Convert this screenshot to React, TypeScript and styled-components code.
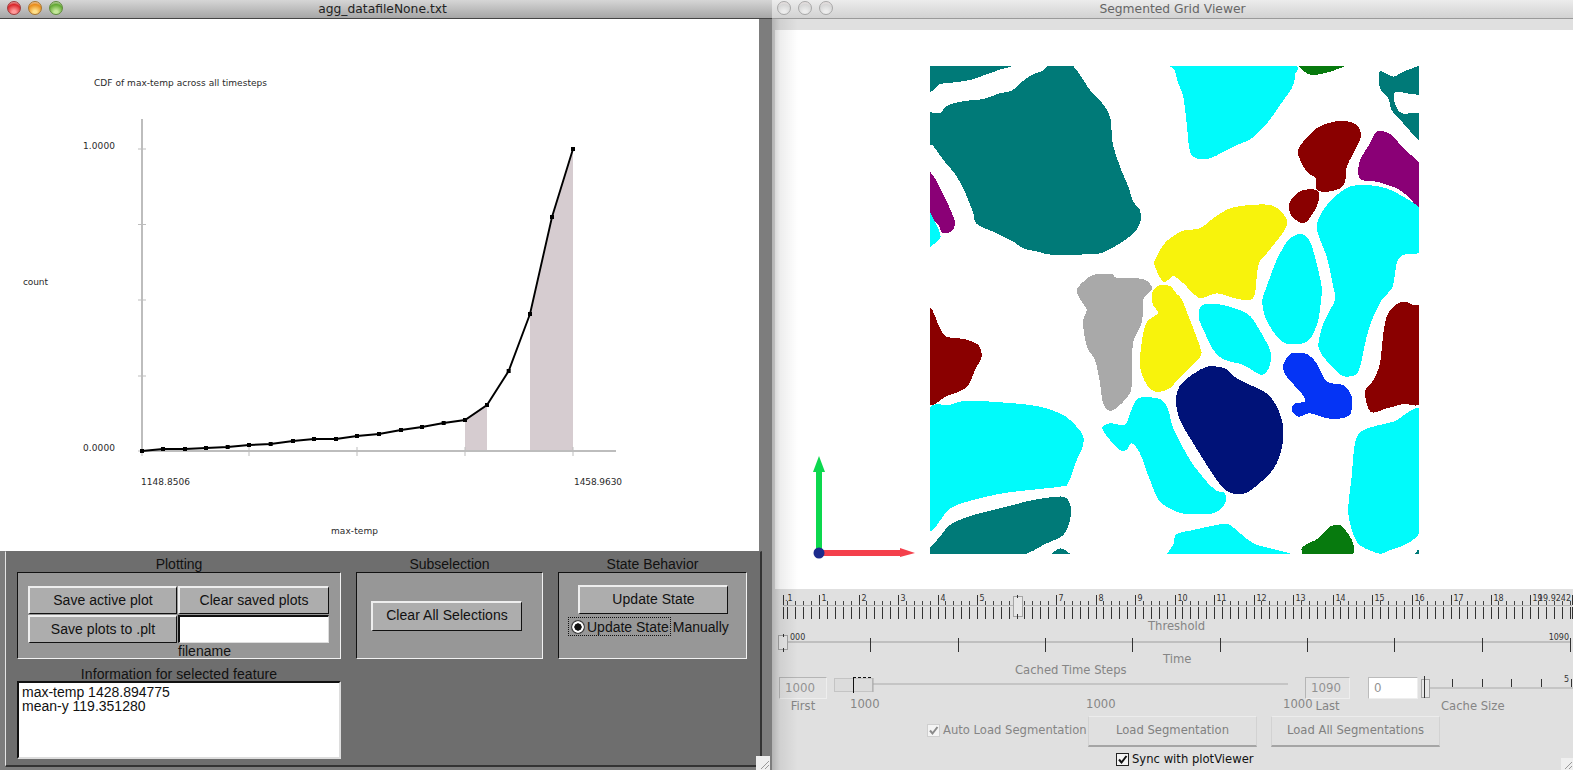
import React from "react";
import styled, { createGlobalStyle } from "styled-components";

const Global = createGlobalStyle`
  html, body { margin: 0; padding: 0; width: 1573px; height: 770px; overflow: hidden; background: #7d7d7d; }
  #root { width: 1573px; height: 770px; }
  * { box-sizing: border-box; }
`;

const Desktop = styled.div`
  display: flex;
  width: 1573px;
  height: 770px;
  overflow: hidden;
`;

/* ---------- window chrome ---------- */
const LeftWindow = styled.section`
  width: 772px;
  height: 770px;
  background: #7d7d7d;
  display: flex;
  flex-direction: column;
`;
const RightWindow = styled.section`
  position: relative;
  width: 801px;
  height: 770px;
  background: #e0e0e0;
  display: flex;
  flex-direction: column;
  &::after {
    content: "";
    position: absolute;
    left: 0;
    top: 19px;
    bottom: 0;
    width: 26px;
    pointer-events: none;
    background: linear-gradient(90deg, rgba(0, 0, 0, 0.2), rgba(0, 0, 0, 0.07) 8px, rgba(0, 0, 0, 0));
  }
`;
const TitleBar = styled.header<{ $active?: boolean }>`
  position: relative;
  flex: none;
  height: 19px;
  display: flex;
  align-items: center;
  justify-content: center;
  padding-right: ${(p) => (p.$active ? 7 : 0)}px;
  font: 12.3px "DejaVu Sans", sans-serif;
  color: ${(p) => (p.$active ? "#222" : "#666")};
  background: ${(p) =>
    p.$active ? "linear-gradient(#d6d6d6, #a6a6a6)" : "linear-gradient(#ececec, #d2d2d2)"};
  border-bottom: 1px solid ${(p) => (p.$active ? "#454545" : "#9a9a9a")};
`;
const Lights = styled.div<{ $left: number }>`
  position: absolute;
  left: ${(p) => p.$left}px;
  top: 1px;
  display: flex;
  gap: 7px;
`;
const Light = styled.span<{ $a: string; $b: string; $edge: string }>`
  width: 14px;
  height: 14px;
  border-radius: 50%;
  border: 1px solid ${(p) => p.$edge};
  background: radial-gradient(circle at 50% 85%, ${(p) => p.$b} 15%, ${(p) => p.$a} 65%, #f6e9e9 100%);
`;

/* ---------- plot window ---------- */
const PlotArea = styled.div`
  flex: none;
  width: 759px;
  height: 532px;
  background: #fff;
`;
const FullSvg = styled.svg`
  display: block;
  overflow: visible;
`;
const ChartText = styled.text`
  font: 9px "DejaVu Sans", sans-serif;
  fill: #2a2a2a;
`;
const Panel = styled.div`
  flex: none;
  width: 757px;
  height: 216px;
  margin-left: 5px;
  background: #6e6e6e;
  border-left: 1px solid #e4e4e4;
  border-top: 1px solid #6e6e6e;
  border-right: 2px solid #333;
  border-bottom: 2px solid #333;
  padding-left: 11px;
  font: 14px "Liberation Sans", sans-serif;
  color: #111;
`;
const GroupRow = styled.div`
  display: flex;
  gap: 15px;
`;
const GroupColumn = styled.div<{ $w: number }>`
  width: ${(p) => p.$w}px;
`;
const Heading = styled.div`
  height: 20px;
  line-height: 25px;
  text-align: center;
  white-space: nowrap;
`;
const Group = styled.div`
  height: 87px;
  background: #979797;
  border: 1px solid;
  border-color: #111 #f2f2f2 #f2f2f2 #111;
`;
const PlotGroup = styled(Group)`
  padding: 13px 0 0 10px;
  display: grid;
  grid-template-columns: 149px 151px;
  grid-template-rows: 29px 29px 14px;
  column-gap: 1px;
`;
const SubGroup = styled(Group)`
  display: flex;
  align-items: center;
  padding-left: 14px;
`;
const StateGroup = styled(Group)`
  padding: 12px 0 0 19px;
`;
const TkButton = styled.button<{ $w?: number; $h?: number }>`
  width: ${(p) => (p.$w ? `${p.$w}px` : "100%")};
  height: ${(p) => (p.$h ? `${p.$h}px` : "28px")};
  padding: 0 0 2px;
  background: #adadad;
  border: 2px solid;
  border-color: #eee #111 #111 #eee;
  border-right-width: 1px;
  border-bottom-width: 1px;
  font: 14px "Liberation Sans", sans-serif;
  letter-spacing: 0.05px;
  color: #111;
`;
const TkEntry = styled.div`
  height: 28px;
  background: #fff;
  border: 1px solid;
  border-color: #111 #ddd #ddd #111;
  border-width: 2px 1px 1px 2px;
`;
const FileLabel = styled.div`
  grid-column: 2;
  line-height: 15px;
`;
const RadioRow = styled.div`
  display: flex;
  align-items: center;
  margin: 3px 0 0 -10px;
  white-space: nowrap;
`;
const RadioFocus = styled.div`
  display: flex;
  align-items: center;
  gap: 2px;
  height: 19px;
  padding: 0 1px 0 2px;
  border: 1px dotted #111;
`;
const RadioDot = styled.span`
  width: 14px;
  height: 14px;
  border-radius: 50%;
  background: radial-gradient(circle, #111 0 3.4px, #fff 3.9px 5.4px, #444 6px 7px);
`;
const Manual = styled.span`
  margin-left: 2px;
`;
const InfoHeading = styled(Heading)`
  width: 324px;
  height: 22px;
  line-height: 30px;
  letter-spacing: 0.08px;
`;
const InfoBox = styled.div`
  width: 324px;
  height: 78px;
  background: #fff;
  border: 2px solid;
  border-color: #111 #ddd #ddd #111;
  padding: 2px 0 0 3px;
  line-height: 14px;
`;

/* ---------- viewer window ---------- */
const CanvasBand = styled.div`
  flex: none;
  height: 570px;
  padding: 11px 0 0 3px;
`;
const Canvas = styled.div`
  width: 798px;
  height: 559px;
  background: #fff;
`;
const Controls = styled.div`
  padding-top: 1px;
`;
const ScaleLabel = styled.text`
  font: 8px "DejaVu Sans", sans-serif;
  fill: #333;
`;
const MutedLabel = styled.text`
  font: 11.6px "DejaVu Sans", sans-serif;
  fill: #858585;
`;
const Caption = styled.div<{ $h: number; $x: number }>`
  height: ${(p) => p.$h}px;
  padding-left: ${(p) => p.$x}px;
  font: 11.6px "DejaVu Sans", sans-serif;
  line-height: ${(p) => p.$h}px;
  color: #858585;
  text-align: left;
  white-space: nowrap;
`;
const FieldRow = styled.div`
  display: flex;
  align-items: flex-start;
  height: 39px;
  padding-left: 7px;
`;
const FieldColumn = styled.div<{ $w: number; $ml?: number }>`
  width: ${(p) => p.$w}px;
  margin-left: ${(p) => p.$ml ?? 0}px;
  flex: none;
  font: 11.6px "DejaVu Sans", sans-serif;
  color: #858585;
  text-align: center;
  line-height: 14px;
`;
const ValueField = styled.div<{ $white?: boolean }>`
  height: 22px;
  margin-top: 1px;
  padding-left: 5px;
  text-align: left;
  font: 11.8px/20px "DejaVu Sans", sans-serif;
  color: #929292;
  background: ${(p) => (p.$white ? "#fff" : "#e2e2e2")};
  border: 1px solid;
  border-color: ${(p) => (p.$white ? "#bbb #eee #eee #bbb" : "#b5b5b5 #eee #eee #b5b5b5")};
`;
const ActionRow = styled.div`
  display: flex;
  align-items: center;
  height: 31px;
  margin-top: 1px;
  padding-left: 155px;
`;
const CheckLabel = styled.label<{ $strong?: boolean }>`
  display: flex;
  align-items: center;
  gap: 3px;
  font: 11.6px "DejaVu Sans", sans-serif;
  white-space: nowrap;
  color: ${(p) => (p.$strong ? "#111" : "#858585")};
`;
const AutoSlot = styled.div`
  width: 161px;
  padding-bottom: 3px;
`;
const Box = styled.span<{ $strong?: boolean }>`
  width: 13px;
  height: 13px;
  display: inline-flex;
  background: #f4f4f4;
  border: 1px solid ${(p) => (p.$strong ? "#222" : "#cfcfcf")};
`;
const FlatButton = styled.button`
  width: 169px;
  height: 31px;
  margin-right: 14px;
  padding: 0 0 2px;
  background: #e0e0e0;
  border: 1px solid;
  border-color: #ececec #d2d2d2 #a5a5a5 #d2d2d2;
  border-bottom-width: 2px;
  font: 11.6px "DejaVu Sans", sans-serif;
  color: #808080;
`;
const SyncRow = styled.div`
  padding: 5px 0 0 344px;
`;
const Grip = styled.svg`
  position: absolute;
  right: 0;
  bottom: 0;
  width: 12px;
  height: 12px;
  background: #efefef;
`;
const LeftGrip = styled(Grip)`
  right: auto;
  left: 756px;
  bottom: 0;
  position: fixed;
  width: 14px;
  height: 14px;
`;

/* ---------- drawing data ---------- */
type P = [number, number];
const toAbs = (ox: number, oy: number, list: number[]): P[] => {
  const out: P[] = [];
  for (let i = 0; i < list.length; i += 2) out.push([ox + list[i] / 3, oy + list[i + 1] / 3]);
  return out;
};
/* closed Catmull-Rom curve through the traced outline of a blob */
const smooth = (pts: P[]) => {
  const n = pts.length;
  const f = (v: number) => v.toFixed(1);
  let d = `M${f(pts[0][0])} ${f(pts[0][1])}`;
  for (let i = 0; i < n; i++) {
    const a = pts[(i - 1 + n) % n];
    const b = pts[i];
    const c = pts[(i + 1) % n];
    const e = pts[(i + 2) % n];
    const k = 1 / 7;
    d += `C${f(b[0] + (c[0] - a[0]) * k)} ${f(b[1] + (c[1] - a[1]) * k)} ${f(c[0] - (e[0] - b[0]) * k)} ${f(c[1] - (e[1] - b[1]) * k)} ${f(c[0])} ${f(c[1])}`;
  }
  return d + "Z";
};
const C = {
  teal: "#007a78",
  cyan: "#00fbfb",
  yellow: "#f8f30c",
  red: "#8a0000",
  purple: "#8a0076",
  gray: "#a9a9a9",
  navy: "#001278",
  blue: "#0534f5",
  green: "#077a0e",
};
const blobs: [string, number, number, number[]][] = [
  [C.teal, 920, 60, [20,10,280,10,230,32,180,50,150,60,95,68,60,72,20,100]],
  [C.teal, 920, 60, [20,162,60,160,75,142,95,132,140,122,185,118,240,100,275,92,300,70,335,45,370,32,390,14,452,14,480,45,510,90,555,140,572,180,578,250,600,320,625,380,640,425,660,450,660,490,640,520,600,550,560,572,525,582,395,584,355,575,310,565,280,545,230,520,170,492,160,460,145,420,125,375,100,335,70,300,40,258,20,245]],
  [C.purple, 920, 60, [20,335,45,355,65,395,85,435,100,470,105,490,97,512,68,520,55,495,20,445]],
  [C.cyan, 920, 60, [20,450,45,485,60,520,60,535,42,552,20,556]],
  [C.cyan, 1170, 60, [10,6,355,12,375,45,365,85,330,135,295,185,245,235,190,260,125,293,85,297,60,275,50,190,40,110,25,70,14,30]],
  [C.green, 1170, 60, [390,10,530,10,490,32,440,44,410,40]],
  [C.teal, 1170, 60, [628,38,640,36,670,50,700,35,745,18,760,10,760,100,680,95,672,110,675,130,695,160,760,165,760,250,700,190,665,150,655,115,630,85]],
  [C.red, 1170, 60, [392,255,440,205,480,188,520,182,560,195,573,230,550,280,530,320,525,365,510,385,475,395,440,390,438,355,410,335,385,285]],
  [C.red, 1170, 60, [400,390,440,390,447,410,440,440,410,485,385,485,360,460,358,430,375,405]],
  [C.purple, 1170, 60, [632,212,665,225,700,265,760,330,760,460,720,415,680,385,620,365,575,360,565,340,570,300,600,250,615,220]],
  [C.yellow, 1170, 60, [0,535,40,512,90,505,130,475,180,445,240,435,300,435,335,455,352,490,330,530,290,580,265,615,255,700,240,720,195,715,140,700,95,715,75,705,40,670,12,648,0,655,-21,666,-45,620,-45,600,-20,555]],
  /* tall centre cyan */
  [C.cyan, 1110, 300, [570,-198,595,-185,615,-130,635,-40,633,0,625,60,605,110,580,130,525,130,490,95,465,50,457,0,470,-40,500,-120,535,-180]],
  /* large right cyan */
  [C.cyan, 1110, 300, [725,-342,780,-344,830,-335,880,-310,940,-260,940,-150,880,-135,860,-110,848,-40,815,0,790,50,770,110,750,200,735,225,705,230,680,215,640,170,625,135,640,70,675,0,670,-40,650,-130,620,-215,640,-270,680,-315]],
  [C.red, 1110, 300, [880,5,910,15,940,40,940,295,880,312,830,325,790,338,775,325,765,275,790,240,810,190,820,100,830,50,850,20]],
  [C.gray, 0, 0, [1093,275,1112,274,1117,278,1143,279,1152,287,1150,292,1143,300,1142,322,1133,343,1132,380,1130,393,1120,405,1110,411,1103,403,1100,383,1095,360,1087,347,1083,323,1087,310,1086,308,1077,293,1080,285].map((v) => v * 3)],
  [C.yellow, 0, 0, [1160,285,1170,286,1176,293,1182,300,1190,320,1200,347,1200,357,1180,377,1170,388,1157,392,1147,385,1140,367,1142,340,1147,322,1158,313,1153,305,1152,293].map((v) => v * 3)],
  [C.cyan, 1110, 300, [285,12,340,15,400,35,430,60,480,150,478,200,455,225,400,195,340,178,310,150,285,100,268,60,268,30]],
  [C.navy, 1110, 300, [285,202,345,205,380,235,470,280,500,320,518,370,518,430,500,490,470,530,410,578,360,578,320,540,250,430,210,360,198,300,215,250]],
  [C.blue, 1110, 300, [545,160,590,162,620,190,650,245,700,255,725,290,722,340,695,355,650,355,600,340,565,350,545,330,555,310,585,305,575,280,530,230,520,195]],
  [C.cyan, 1110, 300, [85,295,150,297,175,330,190,385,240,480,290,545,320,572,345,580,345,610,310,640,215,640,150,605,120,540,90,460,65,430,50,450,30,450,0,420,-24,384,0,370,45,375,60,340]],
  [C.cyan, 1110, 300, [200,702,250,690,320,675,360,675,430,730,545,770,192,785,192,730]],
  [C.green, 1110, 300, [578,740,625,715,660,680,695,678,730,732,715,775,576,785,576,760]],
  [C.cyan, 1110, 300, [940,340,850,365,760,390,735,430,725,530,715,640,740,725,790,755,830,755,940,675]],
  [C.teal, 1110, 300, [912,770,925,750,935,770]],
  [C.red, 800, 300, [386,30,420,85,440,110,495,118,535,135,545,170,525,210,500,262,440,288,380,302]],
  [C.cyan, 800, 300, [380,345,450,315,505,302,640,310,720,320,790,345,830,380,850,410,848,440,830,480,805,548,780,560,620,578,520,600,450,625,380,685]],
  [C.teal, 800, 300, [450,675,510,648,620,620,700,600,790,590,812,620,810,660,790,705,740,730,640,770,380,770,380,755,420,710]],
  [C.teal, 800, 300, [750,770,782,745,815,770]],
];

const curve: P[] = ([
  [66,963],[129,957],[195,957],[258,954],[323,951],[387,945],[452,942],[519,933],[582,927],[648,927],[711,918],
  [777,912],[843,900],[906,891],[971,879],[1035,870],[1101,825],[1166,723],[1230,552],[1296,261],[1359,57],
] as P[]).map(([x, y]) => [120 + x / 3, 130 + y / 3]);

const range = (n: number) => Array.from({ length: n }, (_, i) => i);
const thresholdLabels = ["1","2","3","4","5","","7","8","9","10","11","12","13","14","15","16","17","18","19"];
const fineTicks = [783.5, ...range(100).map((i) => Math.round(787.4 + i * 7.9) + 0.5), 1572.5];

const Chart = () => (
  <FullSvg width={759} height={532} viewBox="0 19 759 532">
    <polygon points="465,451 465,420 487,405 487,451" fill="#d6ccd0" />
    <polygon points="530,451 530,314 552,217 573,149 573,451" fill="#d6ccd0" />
    <g stroke="#bdbdbd" strokeWidth={2}>
      <line x1={142} y1={119} x2={142} y2={451} />
      <line x1={142} y1={451} x2={616} y2={451} />
    </g>
    <g stroke="#bdbdbd" strokeWidth={1}>
      {[149, 224.5, 300, 376, 451].map((y) => <line key={y} x1={138} x2={146} y1={y} y2={y} />)}
      {[142, 249, 357, 465, 573].map((x) => <line key={x} x1={x} x2={x} y1={447} y2={456} />)}
    </g>
    <polyline points={curve.map((p) => p.join(",")).join(" ")} fill="none" stroke="#000" strokeWidth={1.9} />
    {curve.map(([x, y], i) => <rect key={i} x={x - 2} y={y - 2} width={4} height={4} fill="#000" />)}
    <ChartText x={94} y={86} textLength={173}>CDF of max-temp across all timesteps</ChartText>
    <ChartText x={83} y={149} textLength={32}>1.0000</ChartText>
    <ChartText x={83} y={451} textLength={32}>0.0000</ChartText>
    <ChartText x={23} y={285} textLength={25}>count</ChartText>
    <ChartText x={141} y={485} textLength={49}>1148.8506</ChartText>
    <ChartText x={574} y={485} textLength={48}>1458.9630</ChartText>
    <ChartText x={331} y={534} textLength={47}>max-temp</ChartText>
  </FullSvg>
);

const GridImage = () => (
  <FullSvg width={798} height={559} viewBox="775 30 798 559">
    <defs>
      <clipPath id="gridBounds">
        <rect x={930} y={66} width={489} height={488} />
      </clipPath>
    </defs>
    <g clipPath="url(#gridBounds)" shapeRendering="crispEdges">
      {blobs.map(([fill, ox, oy, pts], i) => <path key={i} fill={fill} d={smooth(toAbs(ox, oy, pts))} />)}
    </g>
    <rect x={816} y={470} width={6} height={82} fill="#0cd84e" />
    <polygon points="819,456 813,472 825,472" fill="#0cd84e" />
    <rect x={822} y={550} width={78} height={6} fill="#f4404c" />
    <polygon points="900,548 915,553 900,557" fill="#f4404c" />
    <circle cx={819} cy={553} r={5.5} fill="#1c2a8c" />
  </FullSvg>
);

const ThresholdScale = () => (
  <FullSvg width={801} height={30} viewBox="772 590 801 30">
    <line x1={783} x2={1572} y1={605.5} y2={605.5} stroke="#b5b5b5" />
    {fineTicks.map((x) => <line key={x} x1={x} x2={x} y1={607} y2={619} stroke="#333" />)}
    {fineTicks.map((x) => <line key={x} x1={x} x2={x} y1={601} y2={605} stroke="#444" />)}
    <line x1={783.5} x2={783.5} y1={595} y2={605} stroke="#333" />
    <ScaleLabel x={785} y={601}>.1</ScaleLabel>
    {thresholdLabels.map((t, i) => {
      const x = Math.round(819.4 + i * 39.5) + 0.5;
      return (
        <g key={i}>
          <line x1={x} x2={x} y1={595} y2={605} stroke="#333" />
          <ScaleLabel x={x + 2} y={601}>{t}</ScaleLabel>
        </g>
      );
    })}
    <ScaleLabel x={1571} y={601} textAnchor="end">19.9242</ScaleLabel>
    <line x1={1572.5} x2={1572.5} y1={595} y2={605} stroke="#333" />
    <rect x={1013.5} y={596.5} width={9} height={20} fill="#e8e8e8" stroke="#a5a5a5" />
    <line x1={1017.5} x2={1017.5} y1={595} y2={598} stroke="#333" />
    <line x1={1017.5} x2={1017.5} y1={614} y2={618} stroke="#333" />
  </FullSvg>
);

const TimeScale = () => (
  <FullSvg width={801} height={20} viewBox="772 632 801 20">
    <line x1={786} x2={1571} y1={641} y2={641} stroke="#b5b5b5" strokeWidth={1.5} />
    {[870, 958, 1045, 1132, 1220, 1307, 1394, 1482, 1570].map((x) => (
      <line key={x} x1={x + 0.5} x2={x + 0.5} y1={637} y2={651} stroke="#333" />
    ))}
    <rect x={778.5} y={634.5} width={9} height={14} fill="#e8e8e8" stroke="#a5a5a5" />
    <line x1={783.5} x2={783.5} y1={633} y2={636} stroke="#333" />
    <line x1={783.5} x2={783.5} y1={647} y2={651} stroke="#333" />
    <ScaleLabel x={790} y={639}>000</ScaleLabel>
    <ScaleLabel x={1569} y={639} textAnchor="end">1090</ScaleLabel>
  </FullSvg>
);

const RangeSlider = () => (
  <FullSvg width={462} height={39} viewBox="834 675 462 39">
    <line x1={873} x2={1288} y1={683} y2={683} stroke="#bdbdbd" strokeWidth={1.5} />
    <rect x={834.5} y={677.5} width={38} height={13} fill="#dcdcdc" stroke="#c4c4c4" />
    <line x1={873} x2={873} y1={677} y2={691} stroke="#a5a5a5" />
    <line x1={853} x2={873} y1={676.5} y2={676.5} stroke="#111" strokeDasharray="3 2" />
    <line x1={853.5} x2={853.5} y1={676} y2={692} stroke="#111" />
    <MutedLabel x={850} y={707}>1000</MutedLabel>
    <MutedLabel x={1086} y={707}>1000</MutedLabel>
    <MutedLabel x={1283} y={707}>1000</MutedLabel>
  </FullSvg>
);

const CacheScale = () => (
  <FullSvg width={153} height={24} viewBox="1420 675 153 24">
    <line x1={1429} x2={1573} y1={687} y2={687} stroke="#bdbdbd" strokeWidth={1.5} />
    {[1452, 1482, 1511, 1541, 1571].map((x) => (
      <line key={x} x1={x + 0.5} x2={x + 0.5} y1={678} y2={686} stroke="#333" />
    ))}
    <rect x={1421.5} y={678.5} width={8} height={18} fill="#e8e8e8" stroke="#a5a5a5" />
    <line x1={1424.5} x2={1424.5} y1={675} y2={697} stroke="#333" />
    <ScaleLabel x={1569} y={681} textAnchor="end">5</ScaleLabel>
  </FullSvg>
);

const Check = ({ color }: { color: string }) => (
  <svg width={11} height={11} viewBox="0 0 11 11">
    <path d="M2 5.5 L4.5 8.5 L9.5 2" fill="none" stroke={color} strokeWidth={2} />
  </svg>
);

export default function App() {
  return (
    <Desktop>
      <Global />
      <LeftWindow>
        <TitleBar $active>
          <Lights $left={7}>
            <Light $a="#d9262a" $b="#ff9a9a" $edge="#9d3a3a" />
            <Light $a="#e88c1a" $b="#ffe08a" $edge="#a5752f" />
            <Light $a="#62a832" $b="#c4e89a" $edge="#5f8a3d" />
          </Lights>
          agg_datafileNone.txt
        </TitleBar>
        <PlotArea>
          <Chart />
        </PlotArea>
        <Panel>
          <GroupRow>
            <GroupColumn $w={324}>
              <Heading>Plotting</Heading>
              <PlotGroup>
                <TkButton>Save active plot</TkButton>
                <TkButton>Clear saved plots</TkButton>
                <TkButton>Save plots to .plt</TkButton>
                <TkEntry />
                <FileLabel>filename</FileLabel>
              </PlotGroup>
            </GroupColumn>
            <GroupColumn $w={187}>
              <Heading>Subselection</Heading>
              <SubGroup>
                <TkButton $w={151} $h={30}>Clear All Selections</TkButton>
              </SubGroup>
            </GroupColumn>
            <GroupColumn $w={189}>
              <Heading>State Behavior</Heading>
              <StateGroup>
                <TkButton $w={150} $h={29}>Update State</TkButton>
                <RadioRow>
                  <RadioFocus>
                    <RadioDot />
                    Update State
                  </RadioFocus>
                  <Manual>Manually</Manual>
                </RadioRow>
              </StateGroup>
            </GroupColumn>
          </GroupRow>
          <InfoHeading>Information for selected feature</InfoHeading>
          <InfoBox>
            max-temp 1428.894775
            <br />
            mean-y 119.351280
          </InfoBox>
        </Panel>
        <LeftGrip viewBox="0 0 14 14">
          <path d="M13 5 L5 13 M13 9 L9 13" stroke="#999" fill="none" />
        </LeftGrip>
      </LeftWindow>
      <RightWindow>
        <TitleBar>
          <Lights $left={5}>
            <Light $a="#d6d6d6" $b="#ececec" $edge="#a8a8a8" />
            <Light $a="#d6d6d6" $b="#ececec" $edge="#a8a8a8" />
            <Light $a="#d6d6d6" $b="#ececec" $edge="#a8a8a8" />
          </Lights>
          Segmented Grid Viewer
        </TitleBar>
        <CanvasBand>
          <Canvas>
            <GridImage />
          </Canvas>
        </CanvasBand>
        <Controls>
          <ThresholdScale />
          <Caption $h={13} $x={376}>Threshold</Caption>
          <TimeScale />
          <Caption $h={12} $x={391}>Time</Caption>
          <Caption $h={11} $x={243}>Cached Time Steps</Caption>
          <FieldRow>
            <FieldColumn $w={48}>
              <ValueField>1000</ValueField>
              First
            </FieldColumn>
            <FieldColumn $w={462} $ml={7}>
              <RangeSlider />
            </FieldColumn>
            <FieldColumn $w={45} $ml={9}>
              <ValueField>1090</ValueField>
              Last
            </FieldColumn>
            <FieldColumn $w={50} $ml={18}>
              <ValueField $white>0</ValueField>
            </FieldColumn>
            <FieldColumn $w={153} $ml={2}>
              <CacheScale />
              <Caption $h={12} $x={21}>Cache Size</Caption>
            </FieldColumn>
          </FieldRow>
          <ActionRow>
            <AutoSlot>
              <CheckLabel>
                <Box><Check color="#8a8a8a" /></Box>
                Auto Load Segmentation
              </CheckLabel>
            </AutoSlot>
            <FlatButton>Load Segmentation</FlatButton>
            <FlatButton>Load All Segmentations</FlatButton>
          </ActionRow>
          <SyncRow>
            <CheckLabel $strong>
              <Box $strong><Check color="#111" /></Box>
              Sync with plotViewer
            </CheckLabel>
          </SyncRow>
        </Controls>
        <Grip viewBox="0 0 12 12">
          <path d="M11 4 L4 11 M11 8 L8 11" stroke="#999" fill="none" />
        </Grip>
      </RightWindow>
    </Desktop>
  );
}
